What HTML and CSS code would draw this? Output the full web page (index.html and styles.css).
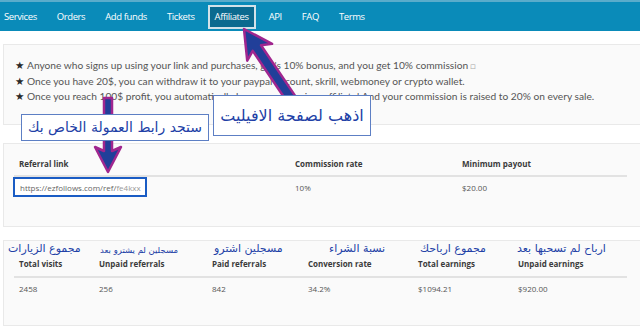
FILE: index.html
```html
<!DOCTYPE html>
<html lang="en">
<head>
  <meta charset="UTF-8" />
  <meta name="viewport" content="width=device-width, initial-scale=1.0" />
  <title>Affiliates</title>
  <link rel="stylesheet" href="styles.css">
</head>
<body>
  <div class="page">
    <!-- Top navigation -->
    <nav class="topnav">
      <ul>
        <li><a href="#">Services</a></li>
        <li><a href="#">Orders</a></li>
        <li><a href="#">Add funds</a></li>
        <li><a href="#">Tickets</a></li>
        <li><a href="#" class="active">Affiliates</a></li>
        <li><a href="#">API</a></li>
        <li><a href="#">FAQ</a></li>
        <li><a href="#">Terms</a></li>
      </ul>
    </nav>

    <main class="content">
      <!-- Program rules -->
      <section class="panel info">
        <ul class="rules">
          <li><span class="star">&#9733;</span>Anyone who signs up using your link and purchases, get's 10% bonus, and you get 10% commission <span class="box">&#9633;</span></li>
          <li><span class="star">&#9733;</span>Once you have 20$, you can withdraw it to your paypal account, skrill, webmoney or crypto wallet.</li>
          <li><span class="star">&#9733;</span>Once you reach 100$ profit, you automatically become a premium affiliate! And your commission is raised to 20% on every sale.</li>
        </ul>
      </section>

      <!-- Referral link -->
      <section class="panel">
        <div class="table link-table">
          <div class="row head">
            <div class="cell">Referral link</div>
            <div class="cell">Commission rate</div>
            <div class="cell">Minimum payout</div>
          </div>
          <div class="row">
            <div class="cell"><span class="ref-link">https://ezfollows.com/ref/<span class="blur">fe4kxx</span></span></div>
            <div class="cell">10%</div>
            <div class="cell">$20.00</div>
          </div>
        </div>
      </section>

      <!-- Stats -->
      <section class="panel stats">
        <div class="table stats-table">
          <div class="row head">
            <div class="cell">Total visits</div>
            <div class="cell">Unpaid referrals</div>
            <div class="cell">Paid referrals</div>
            <div class="cell">Conversion rate</div>
            <div class="cell">Total earnings</div>
            <div class="cell">Unpaid earnings</div>
          </div>
          <div class="row">
            <div class="cell">2458</div>
            <div class="cell">256</div>
            <div class="cell">842</div>
            <div class="cell">34.2%</div>
            <div class="cell">$1094.21</div>
            <div class="cell">$920.00</div>
          </div>
        </div>
        <!-- hand-written notes over the headers -->
        <span class="note n1" dir="rtl">مجموع الزيارات</span>
        <span class="note n2 small" dir="rtl">مسجلين لم يشترو بعد</span>
        <span class="note n3" dir="rtl">مسجلين اشترو</span>
        <span class="note n4" dir="rtl">نسبة الشراء</span>
        <span class="note n5" dir="rtl">مجموع ارباحك</span>
        <span class="note n6" dir="rtl">ارباح لم تسحبها بعد</span>
      </section>
    </main>

    <!-- annotation arrows -->
    <svg class="arrows" width="640" height="329" viewBox="0 0 640 329">
      <polygon transform="translate(244 29) rotate(-34)" points="0,0 15,28 5,23 5,88 -5,88 -5,23 -15,28" />
      <polygon transform="translate(108 172) rotate(180)" points="0,0 13,25 4,21 4,74 -4,74 -4,21 -13,25" />
    </svg>

    <div class="callout c1" dir="rtl">اذهب لصفحة الافيليت</div>
    <div class="callout c2" dir="rtl">ستجد رابط العمولة الخاص بك</div>
  </div>
</body>
</html>
```

FILE: styles.css
```css
* {
  margin: 0;
  padding: 0;
  box-sizing: border-box;
}
body {
  background: #fff;
  font-family: 'Open Sans', sans-serif;
  color: #555;
  overflow: hidden;
}
.page {
  position: relative;
  width: 640px;
  height: 329px;
}

/* top nav */
.topnav {
  height: 31px;
  background: #0a8bb9;
  border-top: 2px solid #5aaccb;
  display: flex;
  align-items: center;
}
.topnav ul {
  list-style: none;
  display: flex;
  align-items: center;
}
.topnav a {
  display: block;
  padding: 0 10px;
  color: #fff;
  text-decoration: none;
  font-size: 9.5px;
  line-height: 14px;
  letter-spacing: -0.4px;
}
.topnav li:first-child a {
  padding-left: 4px;
}
.topnav a.active {
  background: #0b6a8f;
  border: 2px solid #d2e2e9;
  padding: 3px 5px;
  margin: 0 3px;
}

/* panels */
.content {
  padding: 13px 0 0 3px;
  display: flex;
  flex-direction: column;
}
.panel {
  background: #fafafa;
  border: 1px solid #e9e9e9;
  border-right: none;
}
.panel.info {
  height: 81px;
  padding: 13px 11px 0;
}
.panel + .panel {
  margin-top: 18px;
}
.panel.stats {
  position: relative;
  margin-top: 13px;
  height: 86px;
}
.rules {
  list-style: none;
  font-family: Lato, sans-serif;
  font-size: 10.2px;
  line-height: 15.5px;
  color: #555;
}
.rules li {
  display: flex;
  white-space: nowrap;
}
.star {
  width: 12px;
  color: #2a2a2a;
  font-family: 'DejaVu Sans', sans-serif;
  font-size: 10.5px;
}
.box {
  color: #aaa;
  font-size: 9px;
  margin-left: 2px;
}

/* tables */
.table {
  margin-left: 10px;
  width: 613px;
  font-size: 8px;
  line-height: 12px;
}
.row {
  display: grid;
}
.link-table .row {
  grid-template-columns: 276px 167px 170px;
}
.stats-table .row {
  grid-template-columns: 80px 113px 96px 110px 100px 114px;
}
.row.head {
  font-weight: 700;
  color: #3a3a3a;
  border-bottom: 2px solid #e2e2e2;
}
.cell {
  padding-left: 5px;
}
.link-table {
  margin-top: 14px;
  height: 68px;
}
.link-table .head .cell {
  padding-bottom: 5px;
}
.link-table .row:last-child .cell {
  padding-top: 5px;
}
.link-table .row:last-child .cell:first-child {
  padding: 0;
}
.ref-link {
  display: inline-block;
  width: 134px;
  height: 20px;
  margin-left: -1px;
  padding: 3px 0 0 5px;
  border: 2px solid #1a5cc4;
  background: #fff;
  color: #666;
}
.blur {
  color: #999;
}
.stats-table {
  margin-top: 17px;
}
.stats-table .head .cell {
  padding-bottom: 6px;
}
.stats-table .row:last-child .cell {
  padding-top: 5px;
}

/* annotations */
.note {
  position: absolute;
  top: 0;
  font-family: 'DejaVu Sans', sans-serif;
  font-size: 11px;
  line-height: 15px;
  color: #2140a6;
  white-space: nowrap;
}
.note.small {
  font-size: 8.5px;
  top: 2px;
}
.n1 { left: 4px; }
.n2 { left: 96px; }
.n3 { left: 210px; }
.n4 { left: 325px; }
.n5 { left: 416px; }
.n6 { left: 513px; }

.arrows {
  position: absolute;
  left: 0;
  top: 0;
}
.arrows polygon {
  fill: #213f99;
  stroke: #a0268f;
  stroke-width: 2.5;
  stroke-linejoin: round;
}
.callout {
  position: absolute;
  background: #fff;
  border: 1px solid #5d7fc4;
  font-family: 'DejaVu Sans', sans-serif;
  color: #2140a6;
  white-space: nowrap;
  text-align: center;
}
.c1 {
  left: 213px;
  top: 95px;
  width: 158px;
  height: 41px;
  font-size: 16px;
  line-height: 39px;
}
.c2 {
  left: 21px;
  top: 114px;
  width: 188px;
  height: 27px;
  font-size: 14px;
  line-height: 25px;
}
```
